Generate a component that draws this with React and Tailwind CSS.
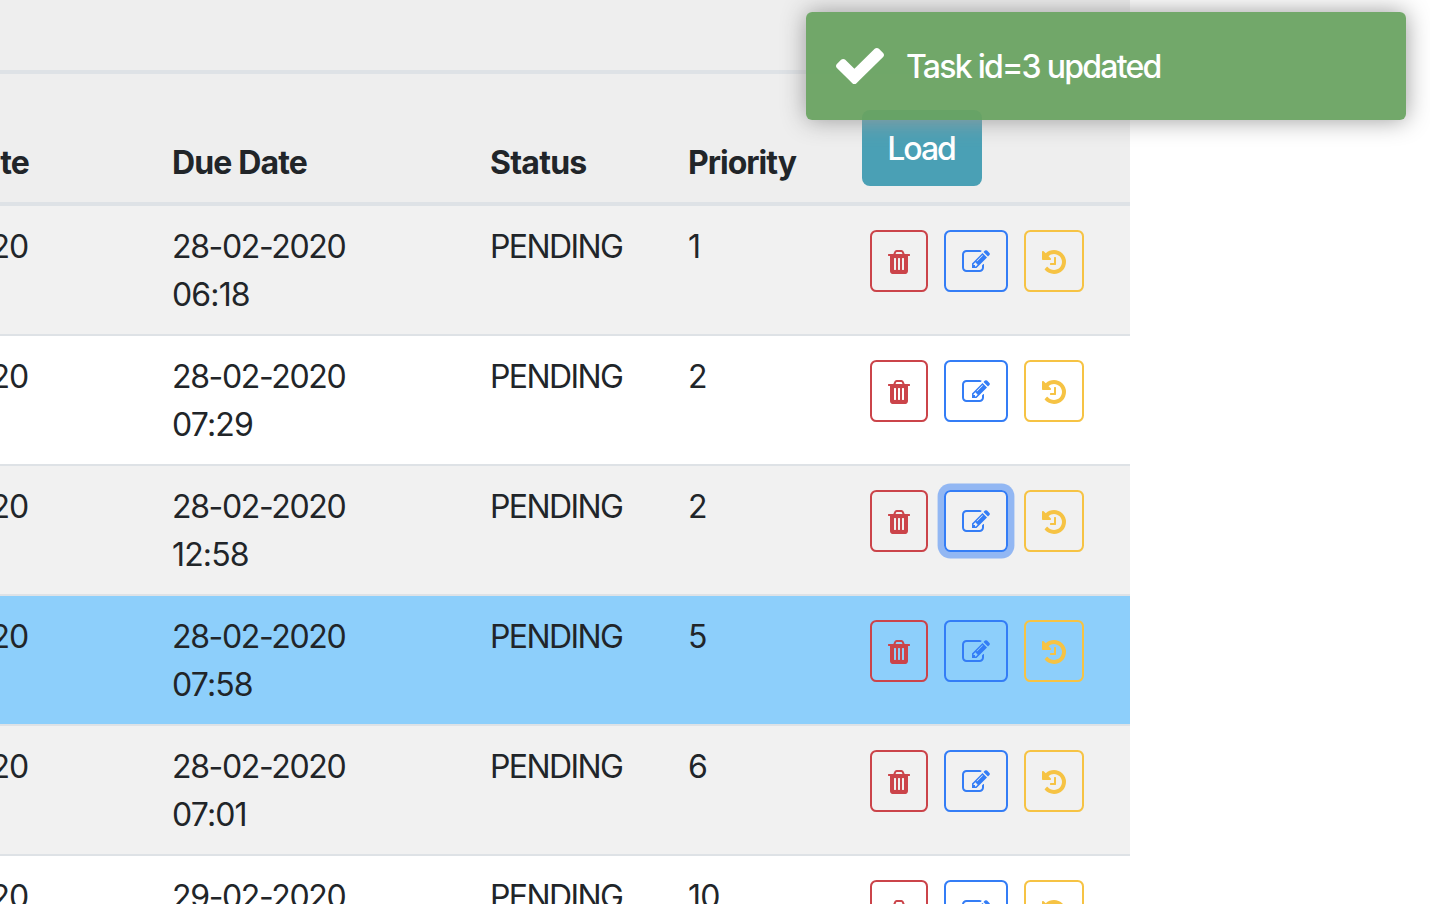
const tasks = [
  { date: '28-02-2020', time: '06:18', priority: 1, bg: 'bg-[#f1f1f1]' },
  { date: '28-02-2020', time: '07:29', priority: 2, bg: 'bg-white' },
  { date: '28-02-2020', time: '12:58', priority: 2, bg: 'bg-[#f1f1f1]', focused: true },
  { date: '28-02-2020', time: '07:58', priority: 5, bg: 'bg-[#8dcffb]' },
  { date: '28-02-2020', time: '07:01', priority: 6, bg: 'bg-[#f1f1f1]' },
  { date: '29-02-2020', time: '08:15', priority: 10, bg: 'bg-white' },
];

const columns = 'grid grid-cols-[172px_318px_198px_174px_268px]';

function TrashIcon() {
  return (
    <svg viewBox="192 0 1408 1792" className="h-7 w-[22px]" fill="currentColor">
      <path d="M704 1376v-704q0-14-9-23t-23-9h-64q-14 0-23 9t-9 23v704q0 14 9 23t23 9h64q14 0 23-9t9-23zm256 0v-704q0-14-9-23t-23-9h-64q-14 0-23 9t-9 23v704q0 14 9 23t23 9h64q14 0 23-9t9-23zm256 0v-704q0-14-9-23t-23-9h-64q-14 0-23 9t-9 23v704q0 14 9 23t23 9h64q14 0 23-9t9-23zm-544-992h448l-48-117q-7-9-17-11h-317q-10 2-17 11zm928 32v64q0 14-9 23t-23 9h-96v948q0 83-47 143.5t-113 60.5h-832q-66 0-113-58.5t-47-141.5v-952h-96q-14 0-23-9t-9-23v-64q0-14 9-23t23-9h309l70-167q15-37 54-63t79-26h320q40 0 79 26t54 63l70 167h309q14 0 23 9t9 23z" />
    </svg>
  );
}

function EditIcon() {
  return (
    <svg viewBox="0 0 1792 1792" className="size-7" fill="currentColor">
      <path d="M888 1184l116-116-152-152-116 116v56h96v96h56zm440-720q-16-16-33 1l-350 350q-17 17-1 33t33-1l350-350q17-17 1-33zm80 594v190q0 119-84.5 203.5t-203.5 84.5h-832q-119 0-203.5-84.5t-84.5-203.5v-832q0-119 84.5-203.5t203.5-84.5h832q63 0 117 25 15 7 18 23 3 17-9 29l-49 49q-14 14-32 8-23-6-45-6h-832q-66 0-113 47t-47 113v832q0 66 47 113t113 47h832q66 0 113-47t47-113v-126q0-13 9-22l64-64q15-15 35-7t20 29zm-96-738l288 288-672 672h-288v-288zm444 132l-92 92-288-288 92-92q28-28 68-28t68 28l152 152q28 28 28 68t-28 68z" />
    </svg>
  );
}

function HistoryIcon() {
  return (
    <svg viewBox="128 0 1536 1792" className="h-7 w-6" fill="currentColor">
      <path d="M1664 896q0 156-61 298t-164 245-245 164-298 61q-172 0-327-72.5t-264-204.5q-7-10-6.5-22.5t8.5-20.5l137-138q10-9 25-9 16 2 23 12 73 95 179 147t225 52q104 0 198.5-40.5t163.5-109.5 109.5-163.5 40.5-198.5-40.5-198.5-109.5-163.5-163.5-109.5-198.5-40.5q-98 0-188 35.5t-160 101.5l137 138q31 30 14 69-17 40-59 40h-448q-26 0-45-19t-19-45v-448q0-42 40-59 39-17 69 14l130 129q107-101 244.5-156.5t284.5-55.5q156 0 298 61t245 164 164 245 61 298zm-640-288v448q0 14-9 23t-23 9h-320q-14 0-23-9t-9-23v-64q0-14 9-23t23-9h224v-352q0-14 9-23t23-9h64q14 0 23 9t9 23z" />
    </svg>
  );
}

function ActionButton({ label, className, children }) {
  return (
    <button
      aria-label={label}
      className={`flex h-[62px] items-start rounded-[6.4px] border-2 px-4 pt-4 ${className}`}
    >
      {children}
    </button>
  );
}

function TaskRow({ task }) {
  return (
    <div className={`${columns} h-[130px] shrink-0 border-b-2 border-[#dee2e6] pt-[17px] ${task.bg}`}>
      <div className="flex justify-end overflow-hidden pr-36 tracking-[-1.1px]">
        <span className="whitespace-nowrap">{task.date}</span>
      </div>
      <div>
        <div className="tracking-[-1.35px]">{task.date}</div>
        <div className="tracking-[-0.85px]">{task.time}</div>
      </div>
      <div className="tracking-[-1.6px]">PENDING</div>
      <div>{task.priority}</div>
      <div className="flex items-start gap-4 pt-[7px] pl-2">
        <ActionButton label="Delete" className="border-[#cb444a] text-[#cb444a]">
          <TrashIcon />
        </ActionButton>
        <ActionButton
          label="Edit"
          className={`border-[#347df6] text-[#347df6] ${task.focused ? 'ring-[6.4px] ring-[#347df6]/50' : ''}`}
        >
          <EditIcon />
        </ActionButton>
        <ActionButton label="History" className="border-[#f6c344] text-[#f6c344]">
          <HistoryIcon />
        </ActionButton>
      </div>
    </div>
  );
}

function Toast() {
  return (
    <div className="absolute top-3 left-[806px] flex h-[108px] w-[600px] items-center rounded-[6px] bg-[#69a361]/94 pl-[30px] font-medium text-white shadow-[0_0_24px_#999999]">
      <svg viewBox="121 334 1550 1188" preserveAspectRatio="none" className="h-9 w-12" fill="currentColor">
        <path d="M1671 566q0 40-28 68l-724 724-136 136q-28 28-68 28t-68-28l-136-136-362-362q-28-28-28-68t28-68l136-136q28-28 68-28t68 28l294 295 656-657q28-28 68-28t68 28l136 136q28 28 28 68z" />
      </svg>
      <span className="ml-[22px] pt-0.5 tracking-[-1.75px]">Task id=3 updated</span>
    </div>
  );
}

export default function App() {
  return (
    <div className="relative h-[904px] w-[1430px] overflow-hidden bg-white font-['Inter',sans-serif] text-[32px] leading-[48px] tracking-[-0.8px] text-[#212529]">
      <div className="flex h-full w-[1130px] flex-col overflow-hidden">
        <div className="h-[74px] shrink-0 border-b-4 border-[#dee2e6] bg-[#eeeeee]" />
        <div className={`${columns} h-[132px] shrink-0 items-end border-b-4 border-[#dee2e6] bg-[#eeeeee] pb-[15px] font-bold tracking-[-0.85px]`}>
          <div className="flex justify-end overflow-hidden pr-[143px]">
            <span className="whitespace-nowrap">Create Date</span>
          </div>
          <div>Due Date</div>
          <div className="tracking-[-0.75px]">Status</div>
          <div className="tracking-[-1px]">Priority</div>
          <button className="mb-px h-[76px] w-[120px] rounded-lg bg-[#4aa0b5] pt-0.5 pr-0.5 font-medium tracking-[-2px] text-white">Load</button>
        </div>
        {tasks.map((task, i) => (
          <TaskRow key={i} task={task} />
        ))}
      </div>
      <Toast />
    </div>
  );
}
